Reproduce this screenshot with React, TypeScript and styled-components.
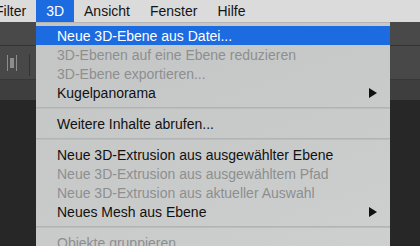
import React from "react";
import styled, { createGlobalStyle } from "styled-components";

const Global = createGlobalStyle`
  html, body { margin: 0; padding: 0; background: #272727; }
  body { font-family: "Liberation Sans", Arial, sans-serif; }
`;

const Screen = styled.div`
  position: relative;
  width: 420px;
  height: 246px;
  overflow: hidden;
  display: flex;
  flex-direction: column;
  background: #272727;
  font-family: "Liberation Sans", Arial, sans-serif;
`;

const MenuBar = styled.div`
  display: flex;
  height: 22px;
  flex: none;
  background: #dbdbdb;
  margin-left: -15px;
`;

const BarItem = styled.div<{ $active?: boolean }>`
  padding: 0 10px;
  height: 22px;
  line-height: 22px;
  font-size: 14px;
  color: ${(p) => (p.$active ? "#ffffff" : "#141414")};
  background: ${(p) => (p.$active ? "#1d6be0" : "transparent")};
  white-space: nowrap;
`;

const Toolbar = styled.div`
  height: 23px;
  flex: none;
  background: #494949;
  border-bottom: 1px solid #333333;
`;

const OptionsBar = styled.div`
  height: 33px;
  flex: none;
  background: #484848;
  border-bottom: 1px solid #383838;
  display: flex;
  align-items: center;
  padding-left: 7px;
  gap: 12px;
`;

const Divider = styled.div`
  width: 1px;
  height: 22px;
  background: #333333;
  margin-top: 4px;
`;

const TabBar = styled.div`
  height: 20px;
  flex: none;
  background: #3e3e3e;
`;

const Canvas = styled.div`
  flex: 1;
  background: #272727;
`;

const Menu = styled.div`
  position: absolute;
  left: 36px;
  top: 22px;
  width: 354px;
  padding-top: 3px;
  border-top: 1px solid #b3b5b5;
  background: linear-gradient(160deg, #c4c6c6 0%, #c8caca 50%, #ced0d0 100%);
  display: flex;
  flex-direction: column;
`;

const Item = styled.div<{ $state?: "active" | "disabled" | "normal" }>`
  height: 19px;
  line-height: 18px;
  padding: 0 13px 0 21px;
  display: flex;
  align-items: center;
  justify-content: space-between;
  font-size: 14px;
  white-space: nowrap;
  color: ${(p) =>
    p.$state === "active" ? "#ffffff" : p.$state === "disabled" ? "#8d8f8f" : "#111111"};
  background: ${(p) => (p.$state === "active" ? "#1d6be0" : "transparent")};
`;

const Separator = styled.div`
  height: 12px;
  display: flex;
  align-items: center;
  &::after {
    content: "";
    display: block;
    width: 100%;
    height: 2px;
    background: linear-gradient(#b2b4b4 50%, #bcbebe 50%);
  }
`;

const AlignIcon = () => (
  <svg width="10" height="16" viewBox="0 0 10 16">
    <rect x="0" y="0" width="1" height="16" fill="#8c8c8c" />
    <rect x="9" y="0" width="1" height="16" fill="#8c8c8c" />
    <rect x="3" y="3" width="4" height="10" fill="#8c8c8c" />
  </svg>
);

const Arrow = () => (
  <svg width="8" height="10" viewBox="0 0 8 10">
    <polygon points="0,0 8,5 0,10" fill="#111111" />
  </svg>
);

type Entry =
  | { sep: true }
  | { label: string; state?: "active" | "disabled" | "normal"; sub?: boolean };

const entries: Entry[] = [
  { label: "Neue 3D-Ebene aus Datei...", state: "active" },
  { label: "3D-Ebenen auf eine Ebene reduzieren", state: "disabled" },
  { label: "3D-Ebene exportieren...", state: "disabled" },
  { label: "Kugelpanorama", sub: true },
  { sep: true },
  { label: "Weitere Inhalte abrufen..." },
  { sep: true },
  { label: "Neue 3D-Extrusion aus ausgewählter Ebene" },
  { label: "Neue 3D-Extrusion aus ausgewähltem Pfad", state: "disabled" },
  { label: "Neue 3D-Extrusion aus aktueller Auswahl", state: "disabled" },
  { label: "Neues Mesh aus Ebene", sub: true },
  { sep: true },
  { label: "Objekte gruppieren", state: "disabled" },
];

export default function App() {
  return (
    <Screen>
      <Global />
      <MenuBar>
        <BarItem>Filter</BarItem>
        <BarItem $active>3D</BarItem>
        <BarItem>Ansicht</BarItem>
        <BarItem>Fenster</BarItem>
        <BarItem>Hilfe</BarItem>
      </MenuBar>
      <Toolbar />
      <OptionsBar>
        <AlignIcon />
        <Divider />
      </OptionsBar>
      <TabBar />
      <Canvas />
      <Menu>
        {entries.map((e, i) =>
          "sep" in e ? (
            <Separator key={i} />
          ) : (
            <Item key={i} $state={e.state ?? "normal"}>
              <span>{e.label}</span>
              {e.sub && <Arrow />}
            </Item>
          )
        )}
      </Menu>
    </Screen>
  );
}
